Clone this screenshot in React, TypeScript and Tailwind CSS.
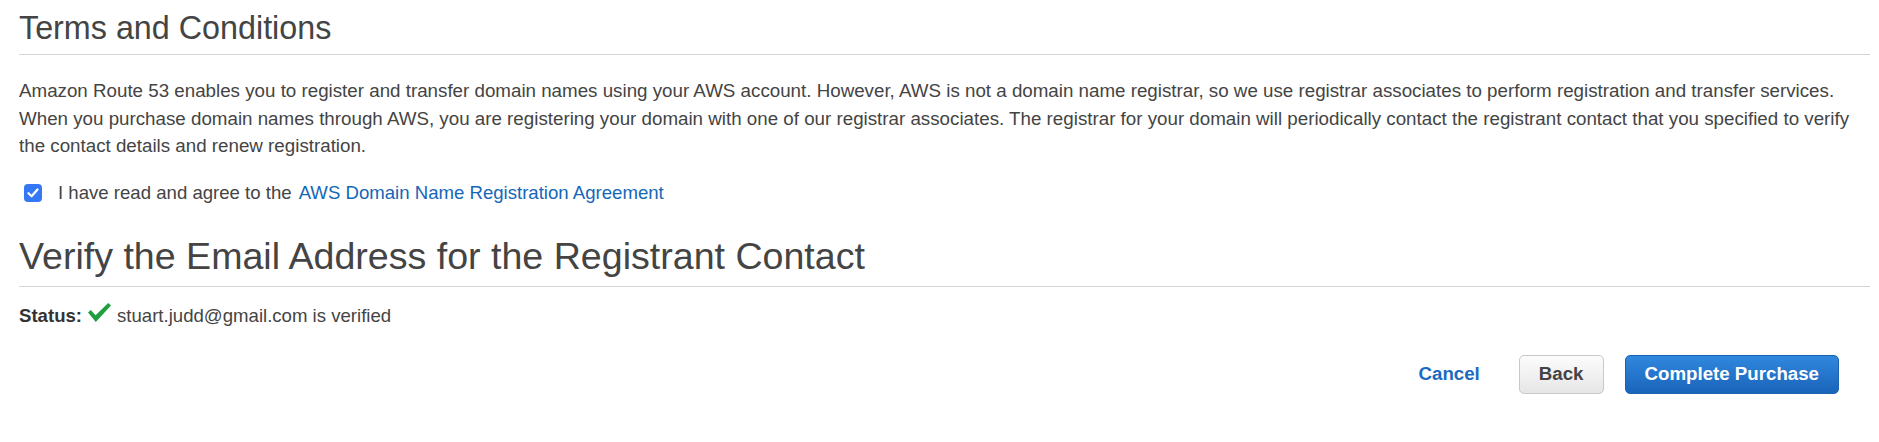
import { useState } from 'react';

const font = { fontFamily: '"Liberation Sans", Arial, Helvetica, sans-serif' };

const CheckIcon = () => (
  <svg width="23" height="19" viewBox="0 0 23 19" className="shrink-0">
    <path d="M0 9.5 L2.8 7 L7.6 12.2 L20.2 0 L23 2.4 L7.8 19 Z" fill="#1f9e40" />
  </svg>
);

const Checkbox = ({ checked, onChange }: { checked: boolean; onChange: () => void }) => (
  <button
    type="button"
    onClick={onChange}
    aria-label="Agree"
    className={`w-[18px] h-[18px] rounded-[4px] flex items-center justify-center shrink-0 mt-[1px] ${checked ? 'bg-[#3478f6]' : 'bg-white border border-[#aaa]'}`}
  >
    {checked && (
      <svg width="12" height="10" viewBox="0 0 12 10">
        <path d="M1.5 5.2 L4.6 8.2 L10.5 1.5" stroke="white" strokeWidth="2.2" fill="none" strokeLinecap="round" strokeLinejoin="round" />
      </svg>
    )}
  </button>
);

export default function App() {
  const [agreed, setAgreed] = useState(true);

  return (
    <div className="bg-white min-h-[442px] pl-[19px] pr-[9px] pt-2 text-[#444]" style={font}>
      {/* Terms section */}
      <h2 className="text-[32.3px] leading-[40px] pb-[6px] border-b border-[#d4d4d4]">
        Terms and Conditions
      </h2>
      <p className="mt-[22px] text-[18.75px] leading-[27.5px]">
        Amazon Route 53 enables you to register and transfer domain names using your AWS account. However, AWS is not a domain name registrar, so we use registrar associates to perform registration and transfer services. When you purchase domain names through AWS, you are registering your domain with one of our registrar associates. The registrar for your domain will periodically contact the registrant contact that you specified to verify the contact details and renew registration.
      </p>
      <div className="mt-[19px] flex items-center pl-[5px] text-[18.6px] leading-[27.5px]">
        <Checkbox checked={agreed} onChange={() => setAgreed(!agreed)} />
        <span className="ml-[16px]">I have read and agree to the</span>
        <a href="#" className="ml-[7px] text-[#1567b8]">AWS Domain Name Registration Agreement</a>
      </div>

      {/* Verify section */}
      <h2 className="mt-[28px] text-[37.6px] leading-[44px] pb-[8px] border-b border-[#d4d4d4]">
        Verify the Email Address for the Registrant Contact
      </h2>
      <div className="mt-[15px] flex items-center text-[18.6px] leading-[27.5px]">
        <span className="font-bold text-[#333]">Status:</span>
        <span className="ml-[6px] -mt-[6px]"><CheckIcon /></span>
        <span className="ml-[6px]">stuart.judd@gmail.com is verified</span>
      </div>

      {/* Actions */}
      <div className="mt-[25px] flex items-center justify-end pr-[31px] text-[18.7px] font-bold">
        <a href="#" className="text-[#1b6ac0]">Cancel</a>
        <button
          type="button"
          className="ml-[39px] h-[39px] px-[19px] rounded-[5px] border border-[#c9c9c9] bg-gradient-to-b from-[#fcfcfc] to-[#e6e6e6] text-[#444]"
        >
          Back
        </button>
        <button
          type="button"
          className="ml-[21px] h-[39px] px-[19px] rounded-[5px] border border-[#1b62b0] bg-gradient-to-b from-[#3088de] to-[#1a64ba] text-white"
        >
          Complete Purchase
        </button>
      </div>
    </div>
  );
}
